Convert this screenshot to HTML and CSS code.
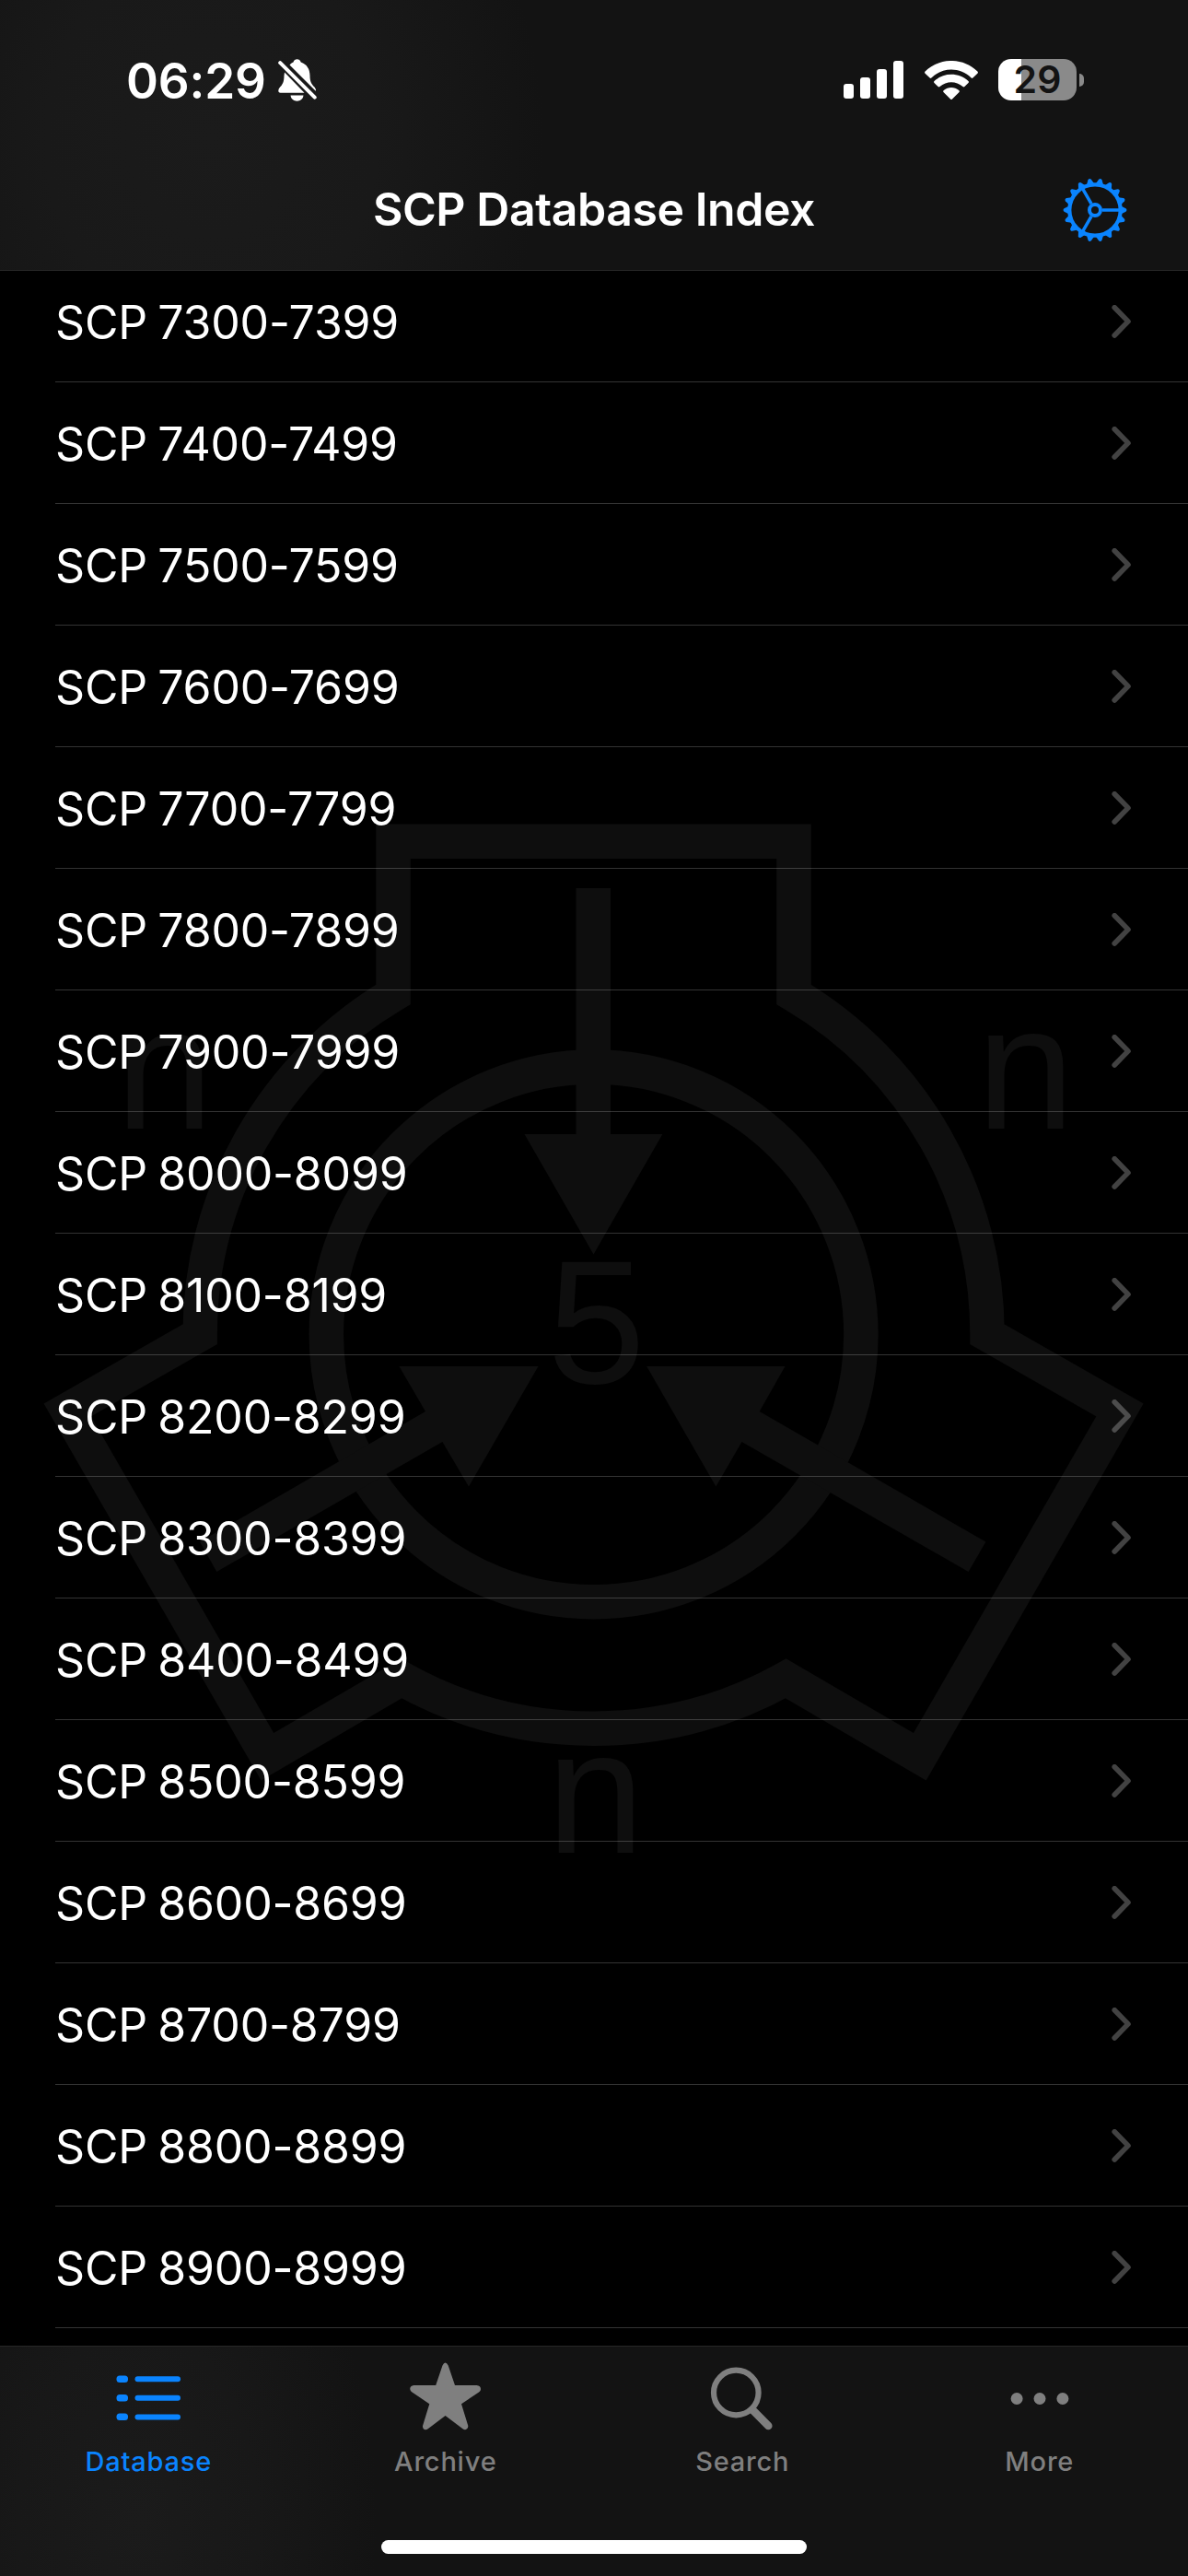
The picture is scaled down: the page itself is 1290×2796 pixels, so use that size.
FILE: index.html
```
<!DOCTYPE html>
<html lang="en">
    <head>
        <meta charset="UTF-8">
        <meta name="viewport" content="width=device-width, initial-scale=1.0">
        <title>SCP Database Index</title>
        <link rel="stylesheet" href="styles.css">
    </head>

    <body>
        <svg class="sprite">
            <symbol id="chevron" viewBox="0 0 22 36">
                <path d="M3.200 2.800L18 17.900L3.200 33" fill="none" stroke="currentColor" stroke-width="5.600" stroke-linecap="round" stroke-linejoin="round"/>
            </symbol>
        </svg>

        <header class="header">
            <div class="status">
                <div class="status-left">
                    <span class="time">06:29</span>
                    <svg class="bell" viewBox="0 0 42 46">
                        <path d="M12 8C13 5 15.500 4 16.500 3.500C17 1.200 19 .3 20.500 .3C22.500 .3 24 1.200 24.700 3.500C31 5.500 34.500 11 34.500 18C34.500 25 36.500 27.500 39.500 30.500Q41.300 32.500 40.800 35L12 6.500Z" fill="#fff"/>
                        <path d="M7 14.500L28.500 36.700H2.500C-.2 36.700-.3 33.500 1.500 31.300C4.500 28 6.500 25.500 6.500 18Z" fill="#fff"/>
                        <path d="M13.500 39.500H27.500C27 43.500 24 45.700 20.500 45.700S14 43.500 13.500 39.500Z" fill="#fff"/>
                        <path d="M4.500 1.500L42 39" stroke="#191919" stroke-width="4"/>
                        <path d="M2.200 4.200L39.700 41.700" stroke="#fff" stroke-width="4" stroke-linecap="round"/>
                    </svg>
                </div>
                <div class="status-right">
                    <svg class="signal" viewBox="0 0 65 41">
                        <g fill="#fff">
                            <rect x="0" y="25" width="11" height="16" rx="3"/>
                            <rect x="18" y="18" width="11" height="23" rx="3"/>
                            <rect x="36" y="9" width="11" height="32" rx="3"/>
                            <rect x="54" y="0" width="11" height="41" rx="3"/>
                        </g>
                    </svg>
                    <svg class="wifi" viewBox="0 0 58 42">
                        <g fill="#fff">
                            <path d="M.6 13.800C-.1 13-.1 12.300 .6 11.600C16-3.900 42-3.900 57.400 11.600C58.100 12.300 58.100 13 57.400 13.800L52.400 18.500C51.800 19 51.200 19 50.600 18.500C38.500 6.600 19.500 6.600 7.400 18.500C6.800 19 6.200 19 5.600 18.500Z"/>
                            <path d="M10.500 24C9.900 23.300 9.900 22.600 10.500 22C21 12.300 37 12.300 47.500 22C48.100 22.600 48.100 23.300 47.500 24L43.400 28C42.800 28.600 42.100 28.600 41.500 28.100C34.200 21.700 23.800 21.700 16.500 28.100C15.900 28.600 15.200 28.600 14.600 28Z"/>
                            <path d="M20.700 34.200C20 33.500 20 32.700 20.800 32.100C25.500 28 32.500 28 37.200 32.100C38 32.700 38 33.500 37.300 34.200L30 41.400C29.300 42.100 28.700 42.100 28 41.400Z"/>
                        </g>
                    </svg>
                    <div class="battery"><span>29</span></div>
                    <div class="battery-cap"></div>
                </div>
            </div>
            <div class="nav">
                <h1>SCP Database Index</h1>
                <svg class="gear" viewBox="-35 -35 70 70">
                    <g stroke="#0a84ff" fill="none">
                        <circle r="27.700" stroke-width="4.200"/>
                        <circle r="6" stroke-width="4"/>
                        <path d="M8 0H27M-4 -6.900L-13.500 -23.400M-4 6.900L-13.500 23.400" stroke-width="3.500"/>
                    </g>
                    <g id="teeth" fill="#0a84ff">
                        <g id="teeth3">
                            <path id="tooth" d="M28.500 -4.200L33.500 -1.700Q35.400 0 33.500 1.700L28.500 4.200Z"/>
                            <use href="#tooth" transform="rotate(20)"/>
                            <use href="#tooth" transform="rotate(40)"/>
                        </g>
                        <use href="#teeth3" transform="rotate(60)"/>
                        <use href="#teeth3" transform="rotate(120)"/>
                        <use href="#teeth3" transform="rotate(180)"/>
                        <use href="#teeth3" transform="rotate(240)"/>
                        <use href="#teeth3" transform="rotate(300)"/>
                    </g>
                </svg>
            </div>
        </header>

        <main class="content">
            <!-- SCP emblem behind the list -->
            <svg class="emblem" viewBox="0 294 1290 2252">
                <g fill="none" stroke="#0e0e0e" stroke-width="37.500" stroke-miterlimit="10">
                    <path d="M427 1079.500V913.300H862V1079.500A427.600 427.600 0 0 1 1072 1448.200L1216 1530.400L998.800 1906.700L853.300 1821.800A427.600 427.600 0 0 1 435.900 1821.800L290.400 1906.700L73.200 1530.400L217.200 1448.200A427.600 427.600 0 0 1 427 1079.500Z"/>
                    <circle cx="644.600" cy="1448.400" r="290.300"/>
                </g>
                <g fill="#0e0e0e">
                    <path d="M625.500 964H663V1231H719.400L644.500 1361.400L569.500 1231H625.500Z"/>
                    <path d="M433.400 1483H584.500L509 1613.500L480.400 1565L235.300 1706L217 1673.500L462 1532Z"/>
                    <path d="M852.500 1483H702.200L777.400 1613.500L805.500 1565L1051.600 1706L1070.400 1673.500L824.700 1532Z"/>
                    <g class="emblem-text">
                        <text x="178.500" y="1225">n</text>
                        <text x="1113.500" y="1225">n</text>
                        <text x="646.500" y="2011">n</text>
                        <text x="647.500" y="1500.500">5</text>
                    </g>
                </g>
            </svg>

            <ul class="list">
                <li><span>SCP 7300-7399</span><svg class="chevron"><use href="#chevron"/></svg></li>
                <li><span>SCP 7400-7499</span><svg class="chevron"><use href="#chevron"/></svg></li>
                <li><span>SCP 7500-7599</span><svg class="chevron"><use href="#chevron"/></svg></li>
                <li><span>SCP 7600-7699</span><svg class="chevron"><use href="#chevron"/></svg></li>
                <li><span>SCP 7700-7799</span><svg class="chevron"><use href="#chevron"/></svg></li>
                <li><span>SCP 7800-7899</span><svg class="chevron"><use href="#chevron"/></svg></li>
                <li><span>SCP 7900-7999</span><svg class="chevron"><use href="#chevron"/></svg></li>
                <li><span>SCP 8000-8099</span><svg class="chevron"><use href="#chevron"/></svg></li>
                <li><span>SCP 8100-8199</span><svg class="chevron"><use href="#chevron"/></svg></li>
                <li><span>SCP 8200-8299</span><svg class="chevron"><use href="#chevron"/></svg></li>
                <li><span>SCP 8300-8399</span><svg class="chevron"><use href="#chevron"/></svg></li>
                <li><span>SCP 8400-8499</span><svg class="chevron"><use href="#chevron"/></svg></li>
                <li><span>SCP 8500-8599</span><svg class="chevron"><use href="#chevron"/></svg></li>
                <li><span>SCP 8600-8699</span><svg class="chevron"><use href="#chevron"/></svg></li>
                <li><span>SCP 8700-8799</span><svg class="chevron"><use href="#chevron"/></svg></li>
                <li><span>SCP 8800-8899</span><svg class="chevron"><use href="#chevron"/></svg></li>
                <li><span>SCP 8900-8999</span><svg class="chevron"><use href="#chevron"/></svg></li>
            </ul>
        </main>

        <footer class="tabbar">
            <nav class="tabs">
                <a class="tab active">
                    <svg viewBox="0 0 84 84">
                        <g fill="currentColor">
                            <rect x="7.500" y="22.500" width="12.500" height="7.500" rx="3.500"/>
                            <rect x="7.500" y="43" width="12.500" height="7.500" rx="3.500"/>
                            <rect x="7.500" y="63.500" width="12.500" height="7.500" rx="3.500"/>
                            <rect x="27.500" y="23.200" width="49.500" height="6" rx="3"/>
                            <rect x="27.500" y="43.800" width="49.500" height="6" rx="3"/>
                            <rect x="27.500" y="64.400" width="49.500" height="6" rx="3"/>
                        </g>
                    </svg>
                    <span>Database</span>
                </a>
                <a class="tab">
                    <svg viewBox="0 0 84 84">
                        <path d="M38.500 11.500Q41.500 5.500 44.700 11.500L52 33H75.500C81 33.500 81 38.500 78 40.500L59 53.300L66.300 77C66.500 80.500 63.500 82.500 60.500 80.300L41.600 66L22.700 80.300C19.500 82.500 16.700 80.500 17 77L24.300 53.300L5.500 40.500C2 38 2.500 33.500 7.500 33H31.200Z" fill="currentColor"/>
                    </svg>
                    <span>Archive</span>
                </a>
                <a class="tab">
                    <svg viewBox="0 0 84 84">
                        <g fill="none" stroke="currentColor">
                            <circle cx="35.300" cy="41" r="24.300" stroke-width="6.200"/>
                            <path d="M53 59.500L70.300 77" stroke-width="8.500" stroke-linecap="round"/>
                        </g>
                    </svg>
                    <span>Search</span>
                </a>
                <a class="tab">
                    <svg viewBox="0 0 84 84">
                        <g fill="currentColor">
                            <circle cx="17.100" cy="47.500" r="6.500"/>
                            <circle cx="42" cy="47.500" r="6.500"/>
                            <circle cx="66.900" cy="47.500" r="6.500"/>
                        </g>
                    </svg>
                    <span>More</span>
                </a>
            </nav>
            <div class="home"></div>
        </footer>
    </body>
</html>
```

FILE: styles.css
```
*{
    box-sizing: border-box;
}

body{
    margin: 0;
    width: 1290px;
    height: 2796px;
    display: flex;
    flex-direction: column;
    overflow: hidden;
    background: #000;
    color: #fff;
    font-family: Inter, "Liberation Sans", sans-serif;
}

.sprite{
    display: none;
}

/* top bar */
.header{
    height: 294px;
    flex: none;
    border-bottom: 1px solid #272727;
    background: radial-gradient(ellipse 360px 420px at 230px 150px, #1b1b1b 0%, #191919 50%, #131313 100%);
}

.status{
    height: 173px;
    display: flex;
    justify-content: space-between;
    padding: 64px 113px 0 137px;
}

.status-left, .status-right{
    display: flex;
    align-items: center;
    height: 45px;
}

.time{
    width: 165px;
    padding-top: 4px;
    font-size: 53px;
    font-weight: 600;
    letter-spacing: -0.2px;
    line-height: 45px;
}

.bell{
    width: 42px;
    height: 46px;
}

.signal{
    width: 65px;
    height: 41px;
    margin-right: 23px;
}

.wifi{
    width: 58px;
    height: 42px;
    margin-right: 22px;
}

.battery{
    width: 85px;
    height: 45px;
    border-radius: 14px;
    background: linear-gradient(90deg, #fff 25px, #8a8a8a 25px);
    color: #131313;
    font-size: 41px;
    font-weight: 600;
    line-height: 45px;
    text-align: center;
}

.battery-cap{
    width: 5px;
    height: 14px;
    margin-left: 3px;
    border-radius: 0 5px 5px 0;
    background: #8a8a8a;
}

.nav{
    height: 110px;
    display: grid;
    grid-template-columns: 200px 1fr 200px;
    align-items: center;
}

.nav h1{
    grid-column: 2;
    margin: 0 0 3px;
    font-size: 50px;
    font-weight: 600;
    letter-spacing: -0.45px;
    text-align: center;
    white-space: nowrap;
}

.gear{
    width: 70px;
    height: 70px;
    justify-self: end;
    margin-right: 66px;
}

/* list */
.content{
    height: 2252px;
    flex: none;
    overflow: hidden;
    position: relative;
}

.emblem{
    position: absolute;
    top: 0;
    left: 0;
    width: 1290px;
    height: 2252px;
}

.emblem-text{
    font-family: "Liberation Sans", Arial, sans-serif;
    font-size: 191px;
    text-anchor: middle;
}

.list{
    position: relative;
    list-style: none;
    margin: -11px 0 0 60px;
    padding: 0;
}

.list li{
    height: 132px;
    display: flex;
    align-items: center;
    justify-content: space-between;
    padding-right: 61px;
    border-bottom: 1px solid rgba(255, 255, 255, 0.2);
    font-size: 50px;
    letter-spacing: -0.2px;
    word-spacing: -2.5px;
}

.list span{
    padding-top: 3px;
}

.chevron{
    width: 22px;
    height: 36px;
    color: rgba(255, 255, 255, 0.26);
}

/* bottom bar */
.tabbar{
    height: 250px;
    flex: none;
    display: flex;
    flex-direction: column;
    align-items: center;
    border-top: 1px solid #272727;
    background: radial-gradient(ellipse 260px 420px at 150px 190px, #1b1b1b 0%, #181818 50%, #131313 100%);
}

.tabs{
    width: 100%;
    height: 210px;
    display: grid;
    grid-template-columns: repeat(4, 1fr);
}

.tab{
    display: flex;
    flex-direction: column;
    align-items: center;
    padding-top: 9px;
    color: #7f7f7f;
    font-size: 29px;
    font-weight: 500;
}

.tab svg{
    width: 84px;
    height: 84px;
}

.tab span{
    margin-top: 14px;
    line-height: 36px;
    letter-spacing: 0.8px;
}

.active{
    color: #0a84ff;
}

.home{
    width: 462px;
    height: 15px;
    border-radius: 8px;
    background: #fff;
}
```
